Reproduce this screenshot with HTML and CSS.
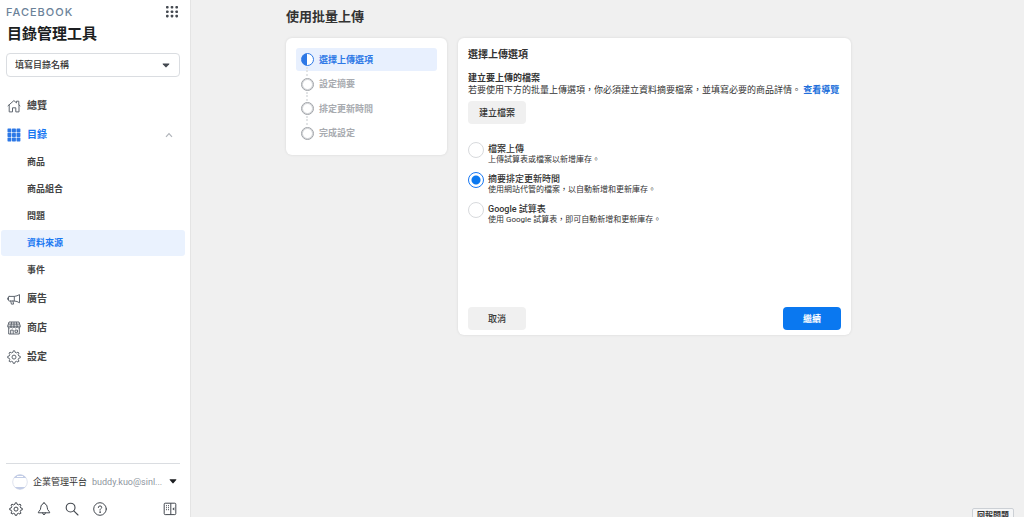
FILE: index.html
```html
<!DOCTYPE html>
<html lang="zh-Hant">
<head>
<meta charset="utf-8">
<meta name="viewport" content="width=device-width, initial-scale=1">
<title>目錄管理工具</title>
<link rel="stylesheet" href="styles.css">
</head>
<body>
<div class="app">
  <aside class="sidebar">
    <header class="brand">
      <span class="wordmark">FACEBOOK</span>
      <button class="icon-button" type="button" aria-label="所有工具">
        <svg width="14" height="14" viewBox="0 0 14 14" fill="#444950"><rect x="1" y="1" width="2.6" height="2.6" rx=".8"/><rect x="5.7" y="1" width="2.6" height="2.6" rx=".8"/><rect x="10.4" y="1" width="2.6" height="2.6" rx=".8"/><rect x="1" y="5.4" width="2.6" height="2.6" rx=".8"/><rect x="5.7" y="5.4" width="2.6" height="2.6" rx=".8"/><rect x="10.4" y="5.4" width="2.6" height="2.6" rx=".8"/><rect x="1" y="9.8" width="2.6" height="2.6" rx=".8"/><rect x="5.7" y="9.8" width="2.6" height="2.6" rx=".8"/><rect x="10.4" y="9.8" width="2.6" height="2.6" rx=".8"/></svg>
      </button>
    </header>
    <h1 class="product">目錄管理工具</h1>
    <div class="picker">
      <select class="picker-select" aria-label="目錄"><option>填寫目錄名稱</option></select>
      <svg class="picker-arrow" width="8" height="5" viewBox="0 0 8 5"><path d="M1 .5h6q.8 0 .2.7L4.6 4.1q-.6.6-1.2 0L.8 1.2Q.2.5 1 .5z" fill="#444950"/></svg>
    </div>

    <nav class="nav">
      <a class="nav-item" href="#">
        <svg width="14" height="14" viewBox="0 0 14 14" fill="none" stroke="#606770" stroke-width="1" stroke-linejoin="round" stroke-linecap="round"><path d="M1 6.8 6.9 1.6 9.5 3.9V2.200h2.300v3.600L13 6.900"/><path d="M2.200 6v6.900h3.300V8.800h3.300v4.100h3.200V6"/></svg>
        <span>總覽</span>
      </a>
      <a class="nav-item nav-item-open" href="#">
        <svg width="14" height="14" viewBox="0 0 14 14" fill="#2d78e6"><rect x=".5" y=".5" width="3.9" height="3.9" rx=".6"/><rect x="5" y=".5" width="3.9" height="3.9" rx=".6"/><rect x="9.5" y=".5" width="3.9" height="3.9" rx=".6"/><rect x=".5" y="5" width="3.9" height="3.9" rx=".6"/><rect x="5" y="5" width="3.9" height="3.9" rx=".6"/><rect x="9.5" y="5" width="3.9" height="3.9" rx=".6"/><rect x=".5" y="9.5" width="3.9" height="3.9" rx=".6"/><rect x="5" y="9.5" width="3.9" height="3.9" rx=".6"/><rect x="9.5" y="9.5" width="3.9" height="3.9" rx=".6"/></svg>
        <span>目錄</span>
        <svg class="nav-caret" width="8" height="6" viewBox="0 0 8 6" fill="none" stroke="#b0b4ba" stroke-width="1.2"><path d="M1 4.8 4 1.6l3 3.2"/></svg>
      </a>
      <a class="nav-sub" href="#">商品</a>
      <a class="nav-sub" href="#">商品組合</a>
      <a class="nav-sub" href="#">問題</a>
      <a class="nav-sub nav-sub-current" href="#" aria-current="page">資料來源</a>
      <a class="nav-sub" href="#">事件</a>
      <a class="nav-item" href="#">
        <svg width="14" height="14" viewBox="0 0 14 14" fill="none" stroke="#606770" stroke-width="1" stroke-linejoin="round" stroke-linecap="round"><path d="M2.200 4.400h5.100q2.800-.3 5.200-1.800v8.200Q10.100 9.100 7.300 9H2.200Q1.500 9 1.500 8.300V5.100Q1.500 4.400 2.200 4.400z"/><path d="M7.300 4.400V9M3.700 9l.7 3.100h2.200L5.900 9M1.500 5.900h-.8v1.600h.8"/></svg>
        <span>廣告</span>
      </a>
      <a class="nav-item" href="#">
        <svg width="14" height="14" viewBox="0 0 14 14" fill="none" stroke="#606770" stroke-width="1" stroke-linejoin="round"><path d="M2 1h10l1.300 4.200H.7zM.7 5.200q0 1.700 1.600 1.700t1.600-1.700q0 1.700 1.600 1.700T7 5.200q0 1.700 1.600 1.700t1.600-1.700q0 1.700 1.600 1.700t1.500-1.700M4.700 1l-.8 4.200M7 1v4.200M9.300 1l.8 4.200M1.500 3.100h11M1.700 6.900V13h10.600V6.900M3.700 13V9.100h2.500V13M8 9.100h2.500v2.200H8z"/></svg>
        <span>商店</span>
      </a>
      <a class="nav-item" href="#">
        <svg width="14" height="14" viewBox="0 0 14 14" fill="none" stroke="#606770" stroke-width="1" stroke-linejoin="round"><path d="M5.900 2.300 6.300.8h1.400l.4 1.500 1.500.6 1.400-.8 1 1-.8 1.400.6 1.500 1.500.4v1.400l-1.500.4-.6 1.500.8 1.400-1 1-1.400-.8-1.500.6-.4 1.500H6.300l-.4-1.500-1.500-.6-1.400.8-1-1 .8-1.400-.6-1.500-1.500-.4V6.400L2.200 6l.6-1.500L2 3.100l1-1 1.400.8z"/><circle cx="7" cy="7.100" r="2"/></svg>
        <span>設定</span>
      </a>
    </nav>

    <footer class="side-foot">
      <button class="account" type="button">
        <svg width="16" height="16" viewBox="0 0 16 16"><circle cx="8" cy="8" r="7.300" fill="#fff" stroke="#dfe3ee"/><path d="M1.800 4a7.300 7.300 0 0 1 12.400 0zM2.600 13a7.300 7.300 0 0 0 10.800 0z" fill="#c3cde6"/><path d="M5 2.500h6" stroke="#fff"/></svg>
        <span class="account-name">企業管理平台</span>
        <span class="account-mail">buddy.kuo@sinl...</span>
        <svg width="8" height="5" viewBox="0 0 8 5"><path d="M1 .3h6q.8 0 .2.700L4.600 4.100q-.6.600-1.200 0L.8 1Q.2.300 1 .3z" fill="#1c1e21"/></svg>
      </button>
      <div class="tools">
        <button class="icon-button" type="button" aria-label="設定">
          <svg width="14" height="14" viewBox="0 0 14 14" fill="none" stroke="#444950" stroke-width="1" stroke-linejoin="round"><path d="M5.900 2.300 6.300.8h1.400l.4 1.500 1.500.6 1.400-.8 1 1-.8 1.400.6 1.500 1.500.4v1.400l-1.500.4-.6 1.500.8 1.400-1 1-1.400-.8-1.500.6-.4 1.500H6.300l-.4-1.500-1.500-.6-1.400.8-1-1 .8-1.400-.6-1.500-1.500-.4V6.400L2.200 6l.6-1.500L2 3.100l1-1 1.400.8z"/><circle cx="7" cy="7.100" r="2"/></svg>
        </button>
        <button class="icon-button" type="button" aria-label="通知">
          <svg width="14" height="14" viewBox="0 0 14 14" fill="none" stroke="#444950" stroke-width="1" stroke-linejoin="round" stroke-linecap="round"><path d="M7 .9q.9 0 1 1 2.200.8 2.200 3.300 0 2.600 1.700 4 .8.600.8 1.600H1.300q0-1 .8-1.600 1.700-1.400 1.700-4Q3.800 2.700 6 1.900q.1-1 1-1z"/><path d="M5.600 10.900q.2 1.800 1.400 1.800t1.400-1.800"/></svg>
        </button>
        <button class="icon-button" type="button" aria-label="搜尋">
          <svg width="14" height="14" viewBox="0 0 14 14" fill="none" stroke="#444950" stroke-width="1.100" stroke-linecap="round"><circle cx="5.600" cy="5.600" r="4.400"/><path d="m8.800 8.800 4.200 4.200"/></svg>
        </button>
        <button class="icon-button" type="button" aria-label="說明">
          <svg width="14" height="14" viewBox="0 0 14 14" fill="none" stroke="#444950" stroke-width="1" stroke-linecap="round"><circle cx="7" cy="7" r="6.300"/><path d="M5.300 5.500Q5.300 3.900 7 3.900t1.700 1.500Q8.700 6.300 7.700 6.800 7 7.200 7 8.200"/><circle cx="7" cy="10.100" r=".3" fill="#444950"/></svg>
        </button>
        <button class="icon-button tool-last" type="button" aria-label="收合側邊欄">
          <svg width="14" height="14" viewBox="0 0 14 14" fill="none" stroke="#444950" stroke-width="1"><rect x="1.200" y="1.200" width="11.600" height="11.400" rx="1"/><path d="M7.800 1.200v11.400M3 3.700h1M5 3.700h1M3 5.700h1M5 5.700h1M3 7.700h1M5 7.700h1"/><path d="M11.300 5.200v3.400L9.300 6.900z" fill="#444950" stroke="none"/></svg>
        </button>
      </div>
    </footer>
  </aside>

  <main class="main">
    <h2 class="page-title">使用批量上傳</h2>
    <div class="columns">
      <section class="card steps-card">
        <ol class="steps">
          <li class="step step-current" aria-current="step"><span class="step-mark"></span>選擇上傳選項</li>
          <li class="step"><span class="step-mark"></span>設定摘要</li>
          <li class="step"><span class="step-mark"></span>排定更新時間</li>
          <li class="step"><span class="step-mark"></span>完成設定</li>
        </ol>
      </section>

      <form class="card form-card">
        <h3 class="card-title">選擇上傳選項</h3>
        <h4 class="block-title">建立要上傳的檔案</h4>
        <p class="block-text">若要使用下方的批量上傳選項，你必須建立資料摘要檔案，並填寫必要的商品詳情。 <a class="link" href="#">查看導覽</a></p>
        <button class="button button-create" type="button">建立檔案</button>
        <div class="options">
          <label class="option">
            <input class="radio" type="radio" name="source">
            <span class="option-text"><span class="option-name">檔案上傳</span><span class="option-note">上傳試算表或檔案以新增庫存。</span></span>
          </label>
          <label class="option">
            <input class="radio" type="radio" name="source" checked>
            <span class="option-text"><span class="option-name">摘要排定更新時間</span><span class="option-note">使用網站代管的檔案，以自動新增和更新庫存。</span></span>
          </label>
          <label class="option">
            <input class="radio" type="radio" name="source">
            <span class="option-text"><span class="option-name">Google 試算表</span><span class="option-note">使用 Google 試算表，即可自動新增和更新庫存。</span></span>
          </label>
        </div>
        <div class="actions">
          <button class="button" type="button">取消</button>
          <button class="button button-primary" type="submit">繼續</button>
        </div>
      </form>
    </div>
  </main>
</div>
<button class="report" type="button">回報問題</button>
</body>
</html>
```

FILE: styles.css
```css
* {
  box-sizing: border-box;
}

body {
  margin: 0;
  background: #f0f0f0;
  color: #333;
  font-family: Roboto, "Noto Sans CJK TC", sans-serif;
  font-size: 9px;
  line-height: 12px;
}

button,
select,
input {
  margin: 0;
  color: inherit;
  font: inherit;
}

h1, h2, h3, h4, p, ol {
  margin: 0;
  padding: 0;
}

a {
  color: inherit;
  text-decoration: none;
}

svg {
  display: block;
  flex: none;
}

.app {
  display: flex;
  min-height: 100vh;
}

.sidebar {
  display: flex;
  flex: none;
  flex-direction: column;
  width: 191px;
  border-right: 1px solid #e4e4e4;
  background: #fff;
}

.brand {
  display: flex;
  align-items: center;
  justify-content: space-between;
  padding: 4px 11px 0 6px;
}

.wordmark {
  color: #6b8299;
  font-family: Inter, "Liberation Sans", sans-serif;
  font-size: 11px;
  font-weight: 500;
  letter-spacing: 1px;
  line-height: 16px;
}

.icon-button {
  padding: 0;
  border: 0;
  background: none;
}

.product {
  padding: 3px 7px 0;
  color: #1c1e21;
  font-size: 15px;
  font-weight: 700;
  line-height: 22px;
}

.picker {
  display: grid;
  align-items: center;
  margin: 8px 10px 0 6px;
}

.picker-select {
  grid-area: 1 / 1;
  width: 100%;
  height: 24px;
  padding: 0 8px;
  border: 1px solid #dadde1;
  border-radius: 4px;
  background: #fff;
  font-weight: 500;
  appearance: none;
}

.picker-arrow {
  grid-area: 1 / 1;
  justify-self: end;
  margin-right: 10px;
  pointer-events: none;
}

.nav {
  display: flex;
  flex-direction: column;
  padding: 14px 5px 0 1px;
}

.nav-item {
  display: flex;
  align-items: center;
  gap: 6px;
  height: 29px;
  padding: 0 12px 0 6px;
  color: #444;
  font-size: 10px;
  font-weight: 700;
}

.nav-item-open {
  color: #1877f2;
}

.nav-caret {
  margin-left: auto;
}

.nav-sub {
  height: 26px;
  margin-bottom: 1px;
  padding-left: 26px;
  border-radius: 3px;
  color: #444;
  font-weight: 700;
  line-height: 26px;
}

.nav-sub-current {
  background: #eaf2fe;
  color: #1877f2;
}

.side-foot {
  margin: auto 10px 0 6px;
  border-top: 1px solid #dadde1;
}

.account {
  display: flex;
  align-items: center;
  width: 100%;
  height: 35px;
  padding: 0 3px 0 6px;
  border: 0;
  background: none;
  text-align: left;
}

.account-name {
  margin-left: 5px;
}

.account-mail {
  flex: 1;
  margin-left: 5px;
  color: #8d949e;
  white-space: nowrap;
}

.tools {
  display: flex;
  gap: 14px;
  padding: 3px 3px 1px;
}

.tool-last {
  margin-left: auto;
}

.main {
  flex: 1;
  padding: 8px 96px 24px 95px;
}

.page-title {
  font-size: 13px;
  font-weight: 700;
  line-height: 18px;
}

.columns {
  display: grid;
  grid-template-columns: minmax(0, 161px) minmax(0, 393px);
  align-items: start;
  gap: 11px;
  margin-top: 12px;
}

.card {
  border-radius: 6px;
  background: #fff;
  box-shadow: 0 0 3px rgba(0, 0, 0, 0.1);
}

.steps-card {
  padding: 10px;
}

.steps {
  display: flex;
  flex-direction: column;
  justify-content: space-between;
  min-height: 97px;
  list-style: none;
}

.step {
  position: relative;
  display: flex;
  align-items: center;
  gap: 5px;
  height: 23px;
  padding-left: 5px;
  border-radius: 3px;
  color: #a8abb0;
  font-weight: 700;
}

.step-current {
  background: #e8f0fe;
  color: #2d78e6;
}

.step-mark {
  width: 13px;
  height: 13px;
  border: 1px solid #a0a3a8;
  border-radius: 50%;
  box-shadow: inset 0 0 0 1px #d4d6d9;
}

.step-current .step-mark {
  border-color: #2d78e6;
  background: linear-gradient(90deg, #2d78e6 50%, #fff 50%);
  box-shadow: none;
}

.step:not(:last-child)::after {
  position: absolute;
  top: 19px;
  left: 10px;
  height: 9px;
  border-left: 2px dotted #e2e4e6;
  content: "";
}

.form-card {
  display: flex;
  flex-direction: column;
  min-height: 297px;
  padding: 9px 10px 5px;
}

.card-title {
  font-size: 10px;
  font-weight: 700;
  line-height: 16px;
}

.block-title {
  margin-top: 9px;
  font-size: 9px;
  font-weight: 700;
}

.link {
  color: #216fdb;
  font-weight: 700;
}

.button {
  min-width: 58px;
  height: 23px;
  padding: 0 10px;
  border: 0;
  border-radius: 4px;
  background: #f0f0f0;
  font-weight: 500;
}

.button-create {
  align-self: flex-start;
  margin-top: 5px;
}

.button-primary {
  background: #0a78f0;
  color: #fff;
  font-weight: 700;
}

.options {
  display: grid;
  gap: 8px;
  margin-top: 19px;
}

.option {
  display: flex;
  align-items: flex-start;
  gap: 4px;
}

.option-text {
  display: grid;
}

.option-name {
  font-weight: 500;
}

.option-note {
  font-size: 8px;
  line-height: 10px;
}

.radio {
  flex: none;
  width: 16px;
  height: 16px;
  margin-top: -1px;
  border: 1px solid #d8dadd;
  border-radius: 50%;
  background: #fff;
  appearance: none;
}

.radio:checked {
  border-color: #1877f2;
  background: radial-gradient(circle, #0a78f0 4px, #fff 5px);
}

.actions {
  display: flex;
  justify-content: space-between;
  margin-top: auto;
}

.report {
  position: fixed;
  right: 10px;
  bottom: -7px;
  height: 16px;
  padding: 0 4px;
  border: 1px solid #ccd0d5;
  border-radius: 2px;
  background: #f5f6f7;
  font-size: 8px;
  font-weight: 700;
  line-height: 14px;
}
```
